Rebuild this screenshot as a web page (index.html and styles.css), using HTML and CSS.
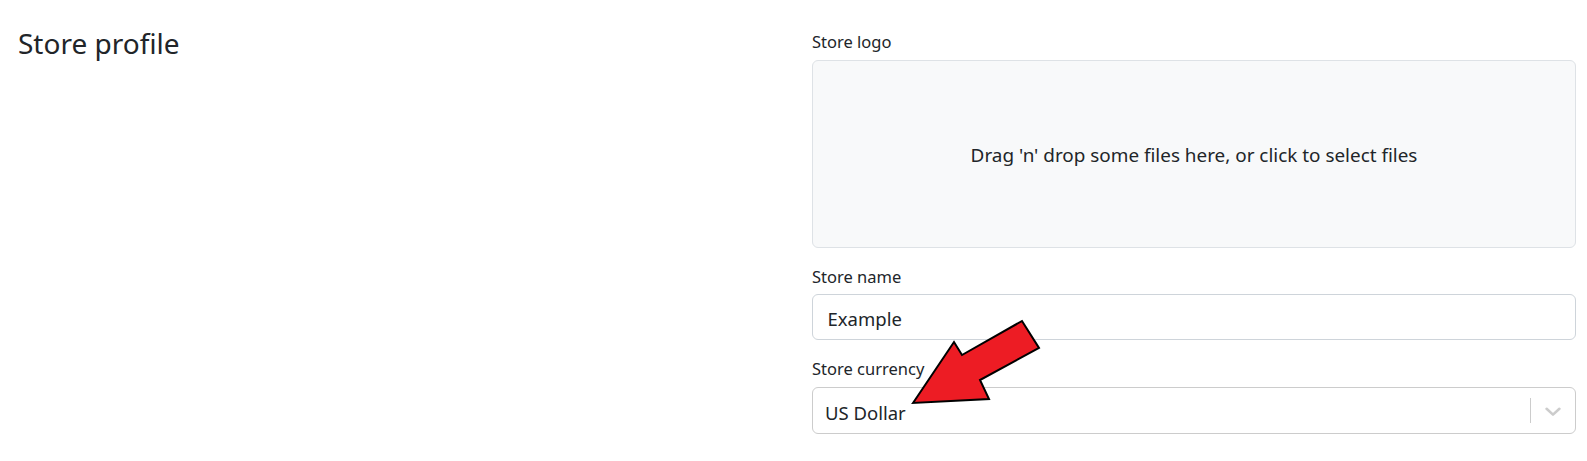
FILE: index.html
```html
<!DOCTYPE html>
<html lang="en">
<head>
<meta charset="utf-8">
<title>Store profile</title>
<link rel="stylesheet" href="styles.css">
</head>
<body>
<div class="page">
  <div class="side">
    <h3 class="title">Store profile</h3>
  </div>
  <form class="form">
    <div class="field">
      <label class="label">Store logo</label>
      <div class="dropzone">Drag 'n' drop some files here, or click to select files</div>
    </div>
    <div class="field">
      <label class="label">Store name</label>
      <div class="input">Example</div>
    </div>
    <div class="field">
      <label class="label">Store currency</label>
      <div class="select">
        <span class="select-value">US Dollar</span>
        <span class="select-sep"></span>
        <span class="select-ind">
          <svg width="16" height="10" viewBox="0 0 16 10"><polyline points="1.6,1.8 8,7.6 14.4,1.8" fill="none" stroke="#cccccc" stroke-width="2.6" stroke-linecap="round" stroke-linejoin="round"/></svg>
        </span>
      </div>
    </div>
  </form>
</div>
<svg class="arrow" width="1587" height="461" viewBox="0 0 1587 461">
  <polygon points="913,403 954,342 962,355 1022,321 1039,348 980,380 989,399" fill="#ed1c24" stroke="#000" stroke-width="2" stroke-linejoin="miter"/>
</svg>
</body>
</html>
```
FILE: styles.css
```css
html, body {
  margin: 0;
  padding: 0;
  background: #ffffff;
}
body {
  font-family: "Noto Sans", "Open Sans", sans-serif;
  color: #212529;
  position: relative;
  width: 1587px;
  height: 461px;
  overflow: hidden;
}
.page {
  display: flex;
  padding: 0 0 0 18px;
}
.side {
  width: 794px;
  flex-shrink: 0;
}
.title {
  margin: 25px 0 0 0;
  font-size: 28px;
  font-weight: 400;
  line-height: 36px;
}
.form {
  width: 764px;
  flex-shrink: 0;
  display: flex;
  flex-direction: column;
  padding-top: 30px;
}
.field {
  display: flex;
  flex-direction: column;
  margin-bottom: 17px;
}
.label {
  font-size: 16.5px;
  line-height: 24px;
  margin-bottom: 5.5px;
}
.dropzone {
  box-sizing: border-box;
  height: 188px;
  border: 1px solid #dee2e6;
  border-radius: 6px;
  background: #f8f9fa;
  display: flex;
  align-items: center;
  justify-content: center;
  font-size: 18.9px;
  padding-top: 3px;
}
.input {
  box-sizing: border-box;
  height: 46px;
  border: 1px solid #ced4da;
  border-radius: 6px;
  display: flex;
  align-items: center;
  padding: 2px 0 0 14.5px;
  font-size: 18.5px;
}
.select {
  box-sizing: border-box;
  height: 47px;
  border: 1px solid #cccccc;
  border-radius: 6px;
  display: flex;
  align-items: center;
  padding: 0 0 0 12px;
  font-size: 18.5px;
}
.select-value {
  flex: 1;
  padding-top: 5px;
}
.select-sep {
  align-self: center;
  width: 1px;
  height: 25px;
  background: #cccccc;
}
.select-ind {
  width: 44px;
  display: flex;
  align-items: center;
  justify-content: center;
  padding-top: 3px;
}
.arrow {
  position: absolute;
  left: 0;
  top: 0;
  pointer-events: none;
}
```
